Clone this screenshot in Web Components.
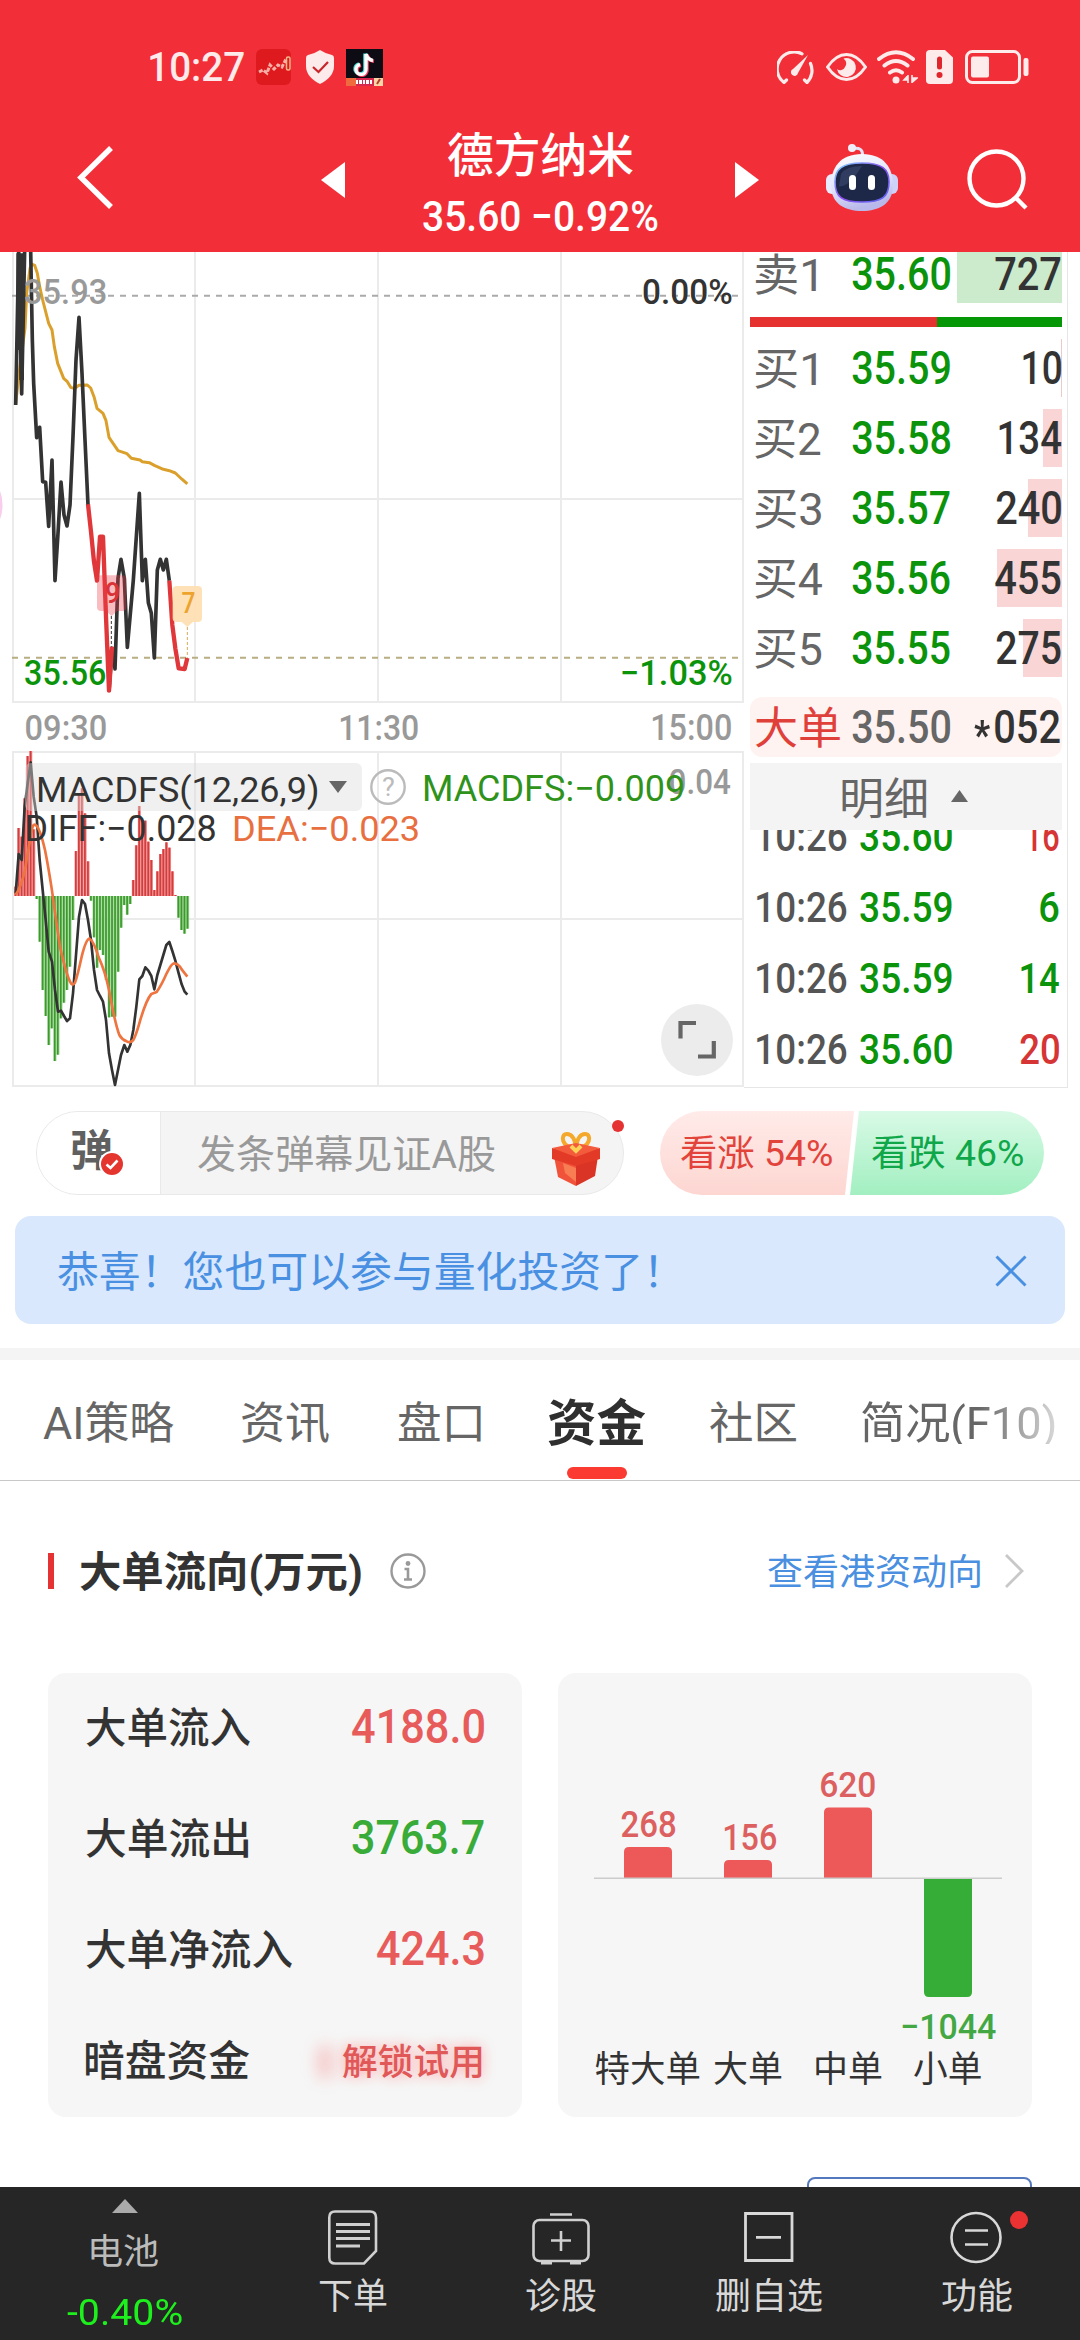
<!DOCTYPE html>
<html lang="zh-CN">
<head>
<meta charset="utf-8">
<title>德方纳米</title>
<style>
    html, body {
        margin: 0;
        padding: 0;
    }

    body {
        width: 1080px;
        height: 2340px;
        overflow: hidden;
        background: #fff;
        color: #333;
        font-family: Roboto, "Noto Sans CJK SC", sans-serif;
    }
</style>
</head>
<body>
<stock-page></stock-page>

<script>
const FONT = 'Roboto, "Noto Sans CJK SC", sans-serif';
const ctx = document.createElement('canvas').getContext('2d');

// left edge and width of the visible ink of a text
function ink(text, size, weight) {
    ctx.font = `${weight} ${size}px ${FONT}`;
    const m = ctx.measureText(text);
    return {left: -m.actualBoundingBoxLeft, width: m.actualBoundingBoxRight + m.actualBoundingBoxLeft};
}

// svg text starting at x, baseline y, squeezed to width w
function label(text, x, y, w, size, fill, weight = 500) {
    const box = ink(text, size, weight);
    const s = w / box.width;
    return `<text transform="translate(${x - box.left * s} ${y}) scale(${s} 1)" font-size="${size}" font-weight="${weight}" fill="${fill}">${text}</text>`;
}

class BaseElement extends HTMLElement {
    constructor() {
        super();
        this.shadow = this.attachShadow({mode: 'open'});
    }

    connectedCallback() {
        this.render();
    }
}

// <fit-text size w weight>: one line of text, set to an exact width
class FitText extends BaseElement {
    render() {
        const size = Number(this.getAttribute('size'));
        const weight = this.getAttribute('weight') || '400';
        const box = ink(this.textContent, size, weight);
        const w = Number(this.getAttribute('w')) || box.width;
        const s = w / box.width;
        // chinese glyphs sit a little high next to Roboto metrics
        const drop = /[\u4e00-\u9fff]/.test(this.textContent) ? size * 0.04 : 0;

        this.shadow.innerHTML = `
        <style>
            :host {
                display: block;
                flex: none;
                width: ${w}px;
                height: ${size}px;
                font-size: ${size}px;
                font-weight: ${weight};
                line-height: ${size}px;
                white-space: nowrap;
            }
            span {
                display: inline-block;
                transform-origin: 0 0;
                transform: translate(${-box.left * s}px, ${drop}px) scaleX(${s});
            }
        </style>
        <span><slot></slot></span>`;
    }
}
customElements.define('fit-text', FitText);

class StatusBar extends BaseElement {
    render() {
        this.shadow.innerHTML = `
        <style>
            :host {
                display: flex;
                align-items: center;
                box-sizing: border-box;
                height: 130px;
                padding: 4px 51px 0 150px;
                color: #fdeaea;
            }
            svg { display: block; flex: none; }
            .left, .right { display: flex; align-items: center; }
            .right { margin-left: auto; }
        </style>
        <div class="left">
            <fit-text size="41" w="94" weight="500">10:27</fit-text>
            <svg width="36" height="36" viewBox="0 0 36 36" style="margin-left:12px">
                <rect width="35" height="36" rx="6" fill="#df1a1f"/>
                <path d="M3 23l4-2 4 3 3-8 4 4 4-4 4 2 3-6 3 2" fill="none" stroke="#f7b0a8" stroke-width="3" stroke-dasharray="4 1.5"/>
                <rect x="30.5" y="8" width="3.5" height="13" rx="1.5" fill="none" stroke="#f6b787" stroke-width="1.5"/>
            </svg>
            <svg width="28" height="34" viewBox="0 0 28 34" style="margin-left:14px">
                <path d="M14 0Q20 4 26 5Q28 5.500 28 8V16Q28 27 14 34Q0 27 0 16V8Q0 5.500 2 5Q8 4 14 0Z" fill="#fdeaea"/>
                <path d="M7 17l5.500 5L22 12" fill="none" stroke="#c9262c" stroke-width="2.200"/>
            </svg>
            <svg width="37" height="37" viewBox="0 0 37 37" style="margin-left:12px">
                <rect width="37" height="37" fill="#0d0b14"/>
                <path d="M20 5v15a5 5 0 1 1-6-4.500M20 5q2 6 7 6.500" fill="none" stroke="#3fd8d8" stroke-width="3.600" transform="translate(-1 -.5)"/>
                <path d="M20 5v15a5 5 0 1 1-6-4.500M20 5q2 6 7 6.500" fill="none" stroke="#f03a5c" stroke-width="3.600" transform="translate(1 .8)"/>
                <path d="M20 5v15a5 5 0 1 1-6-4.500M20 5q2 6 7 6.500" fill="none" stroke="#fff" stroke-width="3.400"/>
                <path d="M0 29h37v8H0z" fill="#d8264c"/>
                <path d="M0 29h10v8H0z" fill="#ef6a3c"/>
                <path d="M28 29h9v8h-9z" fill="#fbd6a8"/>
                <path d="M10 33h16" stroke="#fff" stroke-width="4" stroke-dasharray="2 1 3 1"/>
                <path d="M31 35l3-5" stroke="#b4432a" stroke-width="2"/>
            </svg>
        </div>
        <div class="right">
            <svg width="37" height="33" viewBox="0 0 37 33">
                <g fill="none" stroke="#fdeaea" stroke-width="3.200" stroke-linecap="round">
                    <path d="M25 2.800A17 17 0 0 0 7 31.500L9.500 29M33.500 12.500A17 17 0 0 1 30 31.500L27.500 29"/>
                </g>
                <path d="M31 4L21 22a3.600 3.600 0 1 1-5-4z" fill="#fdeaea"/>
            </svg>
            <svg width="41" height="28" viewBox="0 0 41 28" style="margin-left:12px">
                <path d="M1.500 14Q10 1.500 20.500 1.500T39.500 14Q31 26.500 20.500 26.500T1.500 14Z" fill="none" stroke="#fdeaea" stroke-width="3"/>
                <path d="M17.500 5.500A9.500 9.500 0 1 1 11 16A5 5 0 0 0 19 14Q22 9.500 17.500 5.500Z" fill="#fdeaea"/>
            </svg>
            <svg width="41" height="34" viewBox="0 0 41 34" style="margin-left:10px">
                <g fill="none" stroke="#fdeaea" stroke-width="4" stroke-linecap="round">
                    <path d="M2 9Q19 -4.500 36 9M7.500 15.500Q19 6.500 30.500 15.500M13 22.500Q19 18 25 22.500"/>
                </g>
                <circle cx="19" cy="30" r="3.500" fill="#fdeaea"/>
                <path d="M31 25v8M31 25.500l-4 4.500h4M35 25v8M35 28h5l-5 4.500" fill="#fdeaea" stroke="#fdeaea" stroke-width="1.600"/>
            </svg>
            <svg width="27" height="34" viewBox="0 0 27 34" style="margin-left:8px">
                <path d="M4 0H19L27 7.500V30a4 4 0 0 1-4 4H4a4 4 0 0 1-4-4V4a4 4 0 0 1 4-4Z" fill="#fdeaea"/>
                <path d="M13.500 9v8" stroke="#e0262d" stroke-width="5" stroke-linecap="round"/>
                <circle cx="13.500" cy="25" r="3" fill="#e0262d"/>
            </svg>
            <svg width="64" height="34" viewBox="0 0 64 34" style="margin-left:12px">
                <rect x="1.500" y="1.500" width="53" height="31" rx="6" fill="none" stroke="#fdeaea" stroke-width="3"/>
                <rect x="6" y="6.500" width="18" height="21" rx="2" fill="#fdeaea"/>
                <rect x="58.500" y="8" width="5" height="18" rx="2" fill="#fdeaea"/>
            </svg>
        </div>`;
    }
}
customElements.define('status-bar', StatusBar);

class TitleBar extends BaseElement {
    render() {
        this.shadow.innerHTML = `
        <style>
            :host {
                display: flex;
                align-items: flex-start;
                height: 122px;
                padding-left: 77px;
                color: #fff;
            }
            svg { display: block; flex: none; }
            .title {
                display: flex;
                flex-direction: column;
                align-items: center;
                gap: 19px;
                width: 235px;
                margin: 0 77px 0 78px;
            }
        </style>
        <svg width="37" height="66" viewBox="0 0 37 66" style="margin-top:15px"><path d="M34 3L4 32.500L34 62" fill="none" stroke="#fff" stroke-width="5.500"/></svg>
        <svg width="24" height="36" viewBox="0 0 24 36" style="margin:32px 0 0 207px"><path d="M24 0V36L0 18Z" fill="#fff"/></svg>
        <div class="title">
            <fit-text size="47" w="185" weight="500">德方纳米</fit-text>
            <fit-text size="42" w="235" weight="500">35.60 −0.92%</fit-text>
        </div>
        <svg width="24" height="36" viewBox="0 0 24 36" style="margin-top:32px"><path d="M0 0V36L24 18Z" fill="#fff"/></svg>
        <svg width="72" height="67" viewBox="0 0 72 67" style="margin:14px 0 0 67px">
            <defs>
                <linearGradient id="head" x1="0" y1="0" x2=".3" y2="1"><stop offset="0" stop-color="#fff"/><stop offset=".6" stop-color="#dfe3fb"/><stop offset="1" stop-color="#b9b8ea"/></linearGradient>
                <linearGradient id="rim" x1="0" y1="0" x2="1" y2="1"><stop offset="0" stop-color="#7ad6ff"/><stop offset=".5" stop-color="#8c4ef0"/><stop offset="1" stop-color="#5a6af0"/></linearGradient>
            </defs>
            <path d="M27 4.500Q37 3 36.500 11" fill="none" stroke="#e4e2f5" stroke-width="3"/>
            <circle cx="26" cy="4" r="4" fill="#efeefb"/>
            <rect x="0" y="30" width="12" height="20" rx="6" fill="#e8ebfd"/>
            <rect x="60" y="30" width="12" height="20" rx="6" fill="#cfd2f8"/>
            <path d="M36 10C58 10 67 24 67 41C67 60 53 67 36 67S5 60 5 41C5 24 14 10 36 10Z" fill="url(#head)"/>
            <path d="M36 19C56 19 63 25 63 38C63 53 56 58 36 58S9 53 9 38C9 25 16 19 36 19Z" fill="#1d2748" stroke="url(#rim)" stroke-width="1.600"/>
            <path d="M15 30Q20 22 36 22L28 34Q18 44 13 42Z" fill="#46527a" opacity=".5"/>
            <rect x="23" y="31" width="7" height="15" rx="3.500" fill="#fff"/>
            <rect x="42" y="31" width="7" height="15" rx="3.500" fill="#fff"/>
        </svg>
        <svg width="62" height="62" viewBox="0 0 62 62" style="margin:19px 0 0 69px">
            <circle cx="29.500" cy="29.500" r="27" fill="none" stroke="#fff" stroke-width="4.400"/>
            <path d="M48 48L59 59" stroke="#fff" stroke-width="4.400"/>
        </svg>`;
    }
}
customElements.define('title-bar', TitleBar);

// histogram values: pixel tops, thirds of a pixel, in steps of about 9
const MACD_BARS = [560, 384, 410, 295, 168, 153, 388, 597, 725, 870, 948, 1035, 985, 1083, 1064, 955, 908, 870, 800, 660,
    453, 285, 265, 340, 484, 602, 712, 803, 750, 765, 840, 952, 950, 950, 815, 683, 615, 644, 612,
    540, 436, 318, 360, 362, 425, 480, 570, 514, 462, 447, 427, 443, 514, 585, 653, 690, 701, 686];

class StockChart extends BaseElement {
    bars() {
        return MACD_BARS.map((y, i) => {
            const x = 47 + i * 9.05;
            const top = Math.min(y, 588);
            const h = Math.abs(y - 588);
            const [light, dark] = y < 588 ? ['#f58a8a', '#cf3f3f'] : ['#9ad391', '#3c9a2c'];
            return `<rect x="${x - 4.5}" y="${top}" width="9.1" height="${h}" fill="${light}"/><rect x="${x - 3}" y="${top}" width="5" height="${h}" fill="${dark}"/>`;
        }).join('');
    }

    render() {
        this.shadow.innerHTML = `
        <style>
            :host { display: block; flex: none; width: 744px; height: 836px; }
            svg { display: block; }
            text { font-family: ${FONT}; }
        </style>
        <svg width="744" height="836" viewBox="0 0 744 836">
            <ellipse cx="-7" cy="253" rx="9.500" ry="21" fill="#f9cdec"/>
            <g fill="none" stroke="#ebebeb" stroke-width="2">
                <path d="M13 0V450.500M195 0V450.500M378 0V450.500M561 0V450.500M743 0V450.500M12 450H744M12 247H744"/>
                <path d="M13 500V835M195 500V835M378 500V835M561 500V835M743 500V835M12 500H744M12 667H744M12 834H744"/>
            </g>
            <path d="M12 43.700H739" stroke="#aaa" stroke-width="2" stroke-dasharray="6 6"/>
            <path d="M12 405.700H739" stroke="#b9ad82" stroke-width="2" stroke-dasharray="6 6"/>
            <g transform="translate(0 -2) scale(.33333)" fill="none" stroke-linejoin="round">
                <path d="M47 460L62 330L75 235L80 130L90 55L97 43L104 46L112 70L118 105L128 150L146 220L156 240L163 290L173 340L191 385L202 395L212 412L224 416L236 406L262 405L272 414L282 440L291 475L309 490L318 512L327 562L354 602L381 611L394 625L420 630L427 635L448 638L463 646L490 658L508 662L526 669L545 687L562 702" stroke="#dba02c" stroke-width="9"/>
                <path d="M47 465L56 0L65 432L74 0M92 0L97 270L101 400L110 563L119 532L128 695L137 697L146 829L156 630L165 992L174 850L183 696L192 795L201 828L210 765L219 560L228 330L237 202L246 370L255 570L264 765M327 1325L336 1195L345 1257L354 985L363 928L373 985L382 1192L400 990L418 730L427 992L436 928L445 1058L454 1090L463 1224L472 960L481 928L490 960L499 928L508 992" stroke="#333" stroke-width="11"/>
                <path d="M56 10V300M65 10V390" stroke="#333" stroke-width="14"/>
                <path d="M264 763L273 845L282 935L291 992L300 860L309 860L318 1100L327 1322L336 1190M508 992L517 1125L526 1195L536 1255L554 1257L562 1224" stroke="#e0383a" stroke-width="13"/>
                <path d="M334 1098V1190" stroke="#333" stroke-width="3" stroke-dasharray="9 6"/>
                <path d="M562 1131V1223" stroke="#d3ab55" stroke-width="3" stroke-dasharray="9 6"/>
                <path d="M303 976H367Q379 976 379 988V1071Q379 1083 367 1083H352L335 1098L318 1083H303Q291 1083 291 1071V988Q291 976 303 976Z" fill="#ee3b48" fill-opacity=".34"/>
                <path d="M530 1008H594Q606 1008 606 1020V1104Q606 1116 594 1116H579L562 1131L545 1116H530Q518 1116 518 1104V1020Q518 1008 530 1008Z" fill="#ffdfb3" fill-opacity=".95"/>
            </g>
            ${label('9', 106, 351, 13, 30, '#d93338')}
            ${label('7', 181.5, 361, 13.500, 29, '#eca42e')}
            ${label('35.93', 25, 52, 80.500, 35, '#999')}
            ${label('0.00%', 643, 52, 89, 35, '#333')}
            ${label('35.56', 25, 433, 80.500, 35, '#0b930b')}
            ${label('−1.03%', 622, 433, 110, 35, '#0b930b')}
            ${label('09:30', 25.500, 488, 80.500, 36, '#999')}
            ${label('11:30', 340, 488, 78, 36, '#999')}
            ${label('15:00', 652, 488, 79, 36, '#999')}
            <g transform="translate(0 448) scale(.33333)" fill="none" stroke-linejoin="round">
                ${this.bars()}
                <path d="M47 580L56 462L65 480L74 320L83 250L92 187L101 290L110 350L119 480L128 570L137 660L146 755L156 785L165 870L174 935L183 932L192 948L201 963L210 955L219 880L228 765L237 650L246 600L255 612L264 660L273 720L282 810L291 870L300 888L309 905L318 960L327 1060L336 1110L345 1155L354 1110L363 1065L373 1035L382 1055L391 1035L400 990L409 920L418 838L427 828L436 802L445 812L454 828L463 868L472 825L481 795L490 765L499 735L508 726L517 753L526 782L536 820L545 853L554 875L562 884" stroke="#333" stroke-width="8"/>
                <path d="M47 584Q64 560 75 510Q86 440 97 383Q101 370 108 376Q120 385 135 450Q145 500 156 572Q165 640 180 740Q200 830 213 850Q219 858 225 848Q233 825 245 770Q258 718 268 716Q280 720 296 772Q315 812 327 870Q345 970 358 1005Q365 1018 380 1024Q391 1030 400 1020Q408 1005 418 970Q438 900 454 882L470 876Q485 855 500 820Q515 790 522 790Q535 790 545 808L562 830" stroke="#ee7440" stroke-width="8"/>
            </g>
            <rect x="25" y="511" width="337" height="48" rx="6" fill="#dcdcdc" fill-opacity=".42"/>
            ${label('MACDFS(12,26,9)', 38, 550, 279, 36, '#333', 400)}
            <path d="M329 529H347L338 541Z" fill="#666"/>
            <circle cx="388" cy="535" r="16.700" fill="none" stroke="#bbb" stroke-width="2.400"/>
            ${label('?', 382, 544, 12.500, 26, '#bbb', 400)}
            ${label('0.04', 669.500, 542, 61.500, 35, '#999')}
            ${label('MACDFS:−0.009', 424, 549, 259, 36, '#2f931b', 400)}
            ${label('DIFF:−0.028', 26.500, 589, 189, 36, '#333', 400)}
            ${label('DEA:−0.023', 234, 589, 184, 36, '#e86f3f', 400)}
            <circle cx="697" cy="788" r="36" fill="#ececec"/>
            <path d="M680.500 786.500V771H696M698 804.500H713.800V789" fill="none" stroke="#666" stroke-width="4.200"/>
        </svg>`;
    }
}
customElements.define('stock-chart', StockChart);

class OrderRow extends BaseElement {
    render() {
        const get = name => this.getAttribute(name);
        this.shadow.innerHTML = `
        <style>
            :host {
                display: flex;
                flex: none;
                align-items: center;
                box-sizing: border-box;
                height: 58px;
                padding: 0 1px 1px 5px;
                color: #666;
                background: linear-gradient(${get('fill')}, ${get('fill')}) right / ${get('depth')}px 100% no-repeat;
            }
            .name { width: 97px; }
            .price { color: #0b930b; }
            .volume { margin-left: auto; color: #333; }
        </style>
        <div class="name"><fit-text size="44" w="${get('name-width')}">${get('name')}</fit-text></div>
        <fit-text class="price" size="46" w="98" weight="500">${get('price')}</fit-text>
        <fit-text class="volume" size="46" w="${get('volume-width')}" weight="500">${get('volume')}</fit-text>`;
    }
}
customElements.define('order-row', OrderRow);

class OrderBook extends BaseElement {
    render() {
        const row = (name, nw, price, volume, vw, depth, fill) =>
            `<order-row name="${name}" name-width="${nw}" price="${price}" volume="${volume}" volume-width="${vw}" depth="${depth}" fill="${fill}"></order-row>`;
        const trade = (price, volume, w, color) => `
            <div class="trade">
                <fit-text size="42" w="90" weight="500">10:26</fit-text>
                <fit-text class="green" size="42" w="92" weight="500">${price}</fit-text>
                <fit-text class="${color} amount" size="42" w="${w}" weight="500">${volume}</fit-text>
            </div>`;

        this.shadow.innerHTML = `
        <style>
            :host {
                display: flex;
                flex-direction: column;
                box-sizing: border-box;
                width: 324px;
                height: 836px;
                padding: 0 5px 0 6px;
                border-right: 1px solid #e6e6e6;
                border-bottom: 1px solid #e6e6e6;
                overflow: hidden;
            }
            .ask { height: 51px; display: flex; flex-direction: column; justify-content: flex-end; overflow: hidden; }
            .ratio { display: flex; height: 10px; margin: 14px 0 12px; background: #059705; }
            .ratio i { width: 187px; background: #e63131; }
            .bids { display: flex; flex-direction: column; gap: 12px; }
            .big {
                display: flex;
                align-items: center;
                box-sizing: border-box;
                height: 60px;
                margin: 20px 0 6px;
                padding: 0 2px 0 5px;
                border-radius: 12px;
                background: #fff3f2;
                color: #666;
            }
            .big .red { color: #e0403a; margin-right: 12px; }
            .big .star { margin: 17px 5px 0 auto; color: #333; }
            .big .volume { color: #333; }
            .more {
                display: flex;
                flex: none;
                align-items: center;
                gap: 25px;
                box-sizing: border-box;
                height: 67px;
                padding: 2px 0 0 92px;
                background: #f4f4f4;
                color: #666;
            }
            .more svg { margin-bottom: 3px; }
            .trades { flex: 1; overflow: hidden; }
            .scroll { margin-top: -14px; }
            .trade { display: flex; align-items: flex-start; height: 71px; padding: 0 3px 0 7px; gap: 13px; color: #555; }
            .amount { margin-left: auto; }
            .green { color: #0b930b; }
            .red { color: #d63535; }
        </style>
        <div class="ask">${row('卖1', 61, '35.60', '727', 66, 105, '#cceacc')}</div>
        <div class="ratio"><i></i></div>
        <div class="bids">
            ${row('买1', 61, '35.59', '10', 38, 1, '#eccaca')}
            ${row('买2', 66, '35.58', '134', 62, 19, '#f9d5d5')}
            ${row('买3', 66, '35.57', '240', 65, 34, '#f9d5d5')}
            ${row('买4', 67, '35.56', '455', 66, 65, '#f9d5d5')}
            ${row('买5', 66, '35.55', '275', 65, 39, '#f9d5d5')}
        </div>
        <div class="big">
            <fit-text class="red" size="44" w="85">大单</fit-text>
            <fit-text size="46" w="98" weight="500">35.50</fit-text>
            <fit-text class="star" size="40" w="16" weight="700">*</fit-text>
            <fit-text class="volume" size="46" w="65" weight="500">052</fit-text>
        </div>
        <div class="more">
            <fit-text size="44" w="84">明细</fit-text>
            <svg width="17" height="12" viewBox="0 0 17 12"><path d="M0 12L8.500 0L17 12Z" fill="#666"/></svg>
        </div>
        <div class="trades"><div class="scroll">
            ${trade('35.60', '16', 32, 'red')}
            ${trade('35.59', '6', 19, 'green')}
            ${trade('35.59', '14', 38, 'green')}
            ${trade('35.60', '20', 39, 'red')}
        </div></div>`;
    }
}
customElements.define('order-book', OrderBook);

class CommentBar extends BaseElement {
    render() {
        this.shadow.innerHTML = `
        <style>
            :host { display: flex; height: 84px; margin: 23px 36px 0; justify-content: space-between; }
            .input {
                position: relative;
                display: flex;
                align-items: center;
                box-sizing: border-box;
                width: 588px;
                border: 1px solid #e9e9e9;
                border-radius: 42px;
                background: #f4f4f4;
                color: #999;
            }
            .toggle {
                position: relative;
                display: flex;
                align-items: center;
                box-sizing: border-box;
                width: 124px;
                height: 82px;
                padding: 0 0 7px 35px;
                border-right: 1px solid #e9e9e9;
                border-radius: 41px 0 0 41px;
                background: #fff;
                color: #606060;
            }
            .badge { position: absolute; left: 62px; top: 39px; }
            .hint { margin-left: 37px; }
            .gift { margin: 12px 0 0 56px; }
            .dot { position: absolute; left: 575px; top: 8px; width: 12px; height: 12px; border-radius: 50%; background: #e53333; }
            .vote { position: relative; width: 384px; height: 84px; }
            .vote svg { position: absolute; left: 0; top: 0; }
            .options { position: relative; display: flex; align-items: center; justify-content: space-between; height: 83px; padding: 0 21px; }
            .up { color: #e2433b; }
            .down { color: #0fa74a; }
        </style>
        <div class="input">
            <div class="toggle">
                <fit-text size="43" w="40" weight="700">弹</fit-text>
                <svg class="badge" width="26" height="26" viewBox="0 0 26 26"><circle cx="13" cy="13" r="12" fill="#e5352f" stroke="#fff" stroke-width="2"/><path d="M7.500 13.500l4 3.500 7-7.500" fill="none" stroke="#fff" stroke-width="2.600"/></svg>
            </div>
            <fit-text class="hint" size="39" w="297">发条弹幕见证A股</fit-text>
            <svg class="gift" width="50" height="54" viewBox="0 0 50 54">
                <path d="M25 16C10 16 9 2 16 2Q23 2 25 15Q27 2 34 2C41 2 40 16 25 16Z" fill="none" stroke="#f4a92b" stroke-width="4"/>
                <path d="M3 24L25 32V54L7 45Z" fill="#f0523a"/>
                <path d="M47 24L25 32V54L44 44Z" fill="#d93425"/>
                <path d="M1 16L25 22L49 16V27L25 34L1 27Z" fill="#e23a27"/>
                <path d="M1 16L25 11L49 16L25 25Z" fill="#f35b3c"/>
                <path d="M12 31L25 36V50L14 41Z" fill="#f97d52"/>
                <path d="M20 14L25 19L30 14" fill="none" stroke="#ffd257" stroke-width="4"/>
            </svg>
            <div class="dot"></div>
        </div>
        <div class="vote">
            <svg width="384" height="84" viewBox="0 0 384 84">
                <defs>
                    <linearGradient id="up" x2="0" y2="1"><stop offset="0" stop-color="#ffebe9"/><stop offset="1" stop-color="#fdd6d1"/></linearGradient>
                    <linearGradient id="down" x2="0" y2="1"><stop offset="0" stop-color="#d9fae6"/><stop offset="1" stop-color="#a2efc1"/></linearGradient>
                </defs>
                <path d="M42 0H194L185 84H42A42 42 0 0 1 42 0Z" fill="url(#up)"/>
                <path d="M199 0H342A42 42 0 0 1 342 84H190Z" fill="url(#down)"/>
            </svg>
            <div class="options">
                <fit-text class="up" size="36" w="151">看涨 54%</fit-text>
                <fit-text class="down" size="36" w="151">看跌 46%</fit-text>
            </div>
        </div>`;
    }
}
customElements.define('comment-bar', CommentBar);

class NoticeBanner extends BaseElement {
    render() {
        this.shadow.innerHTML = `
        <style>
            :host {
                display: flex;
                align-items: center;
                justify-content: space-between;
                height: 108px;
                margin: 21px 15px 0;
                padding: 2px 38px 0 43px;
                box-sizing: border-box;
                border-radius: 16px;
                background: #d9e8fc;
                color: #4a90e2;
            }
        </style>
        <fit-text size="42" w="599">恭喜！您也可以参与量化投资了！</fit-text>
        <svg width="32" height="32" viewBox="0 0 32 32"><path d="M1.500 1.500L30.500 30.500M30.500 1.500L1.500 30.500" stroke="#4a90e2" stroke-width="3"/></svg>`;
    }
}
customElements.define('notice-banner', NoticeBanner);

class TabStrip extends BaseElement {
    render() {
        this.shadow.innerHTML = `
        <style>
            :host {
                display: flex;
                align-items: center;
                box-sizing: border-box;
                height: 133px;
                margin-top: 24px;
                padding: 14px 0 0 43px;
                border-top: 12px solid #f4f4f4;
                border-bottom: 1px solid #c8c8c8;
                color: #666;
            }
            .active { position: relative; color: #2f2f2f; }
            .active::after {
                content: "";
                position: absolute;
                left: 19px;
                top: 70px;
                width: 60px;
                height: 12px;
                border-radius: 6px;
                background: #fb3b32;
            }
            .last { -webkit-mask: linear-gradient(90deg, #000 60%, #0004); mask: linear-gradient(90deg, #000 60%, #0004); }
            fit-text { margin-bottom: 10px; }
        </style>
        <fit-text size="44" w="131">AI策略</fit-text>
        <fit-text size="44" w="87" style="margin-left:68px">资讯</fit-text>
        <fit-text size="44" w="83" style="margin-left:69px">盘口</fit-text>
        <div class="active" style="margin-left:67px"><fit-text size="50" w="98" weight="700">资金</fit-text></div>
        <fit-text size="44" w="86" style="margin-left:64px">社区</fit-text>
        <fit-text class="last" size="44" w="193" style="margin-left:66px">简况(F10)</fit-text>`;
    }
}
customElements.define('tab-strip', TabStrip);

class SectionTitle extends BaseElement {
    render() {
        this.shadow.innerHTML = `
        <style>
            :host { display: flex; align-items: center; height: 40px; margin: 70px 56px 0 48px; }
            .mark { width: 6px; height: 36px; margin-right: 26px; background: #e53333; }
            .info { margin-left: 29px; }
            .link { margin: 2px 24px 0 auto; color: #4a8fe0; }
        </style>
        <div class="mark"></div>
        <fit-text size="42" w="281" weight="700">大单流向(万元)</fit-text>
        <svg class="info" width="36" height="36" viewBox="0 0 36 36">
            <circle cx="18" cy="18" r="16.500" fill="none" stroke="#999" stroke-width="2.400"/>
            <circle cx="18" cy="10.500" r="2.400" fill="#999"/>
            <path d="M14.500 16H18V26.500M14 26.500H22" fill="none" stroke="#999" stroke-width="2.600"/>
        </svg>
        <fit-text class="link" size="36" w="212">查看港资动向</fit-text>
        <svg width="20" height="34" viewBox="0 0 20 34"><path d="M2 1L18 17L2 33" fill="none" stroke="#c8c8c8" stroke-width="2.800"/></svg>`;
    }
}
customElements.define('section-title', SectionTitle);

class FlowTable extends BaseElement {
    render() {
        this.shadow.innerHTML = `
        <style>
            :host {
                display: grid;
                grid-template-rows: repeat(4, 111px);
                box-sizing: border-box;
                width: 474px;
                height: 444px;
                padding: 0 38px;
                border-radius: 18px;
                background: #f6f6f6;
            }
            .row { display: flex; align-items: center; justify-content: space-between; padding-bottom: 3px; }
            .red { color: #e85b5b; }
            .green { color: #38ab38; }
            .locked { display: flex; align-items: center; padding: 3px 2px 0 0; }
            .haze { width: 14px; height: 32px; margin-right: 10px; background: #f59a9a; opacity: .55; filter: blur(8px); }
            .locked fit-text { color: #e05858; text-shadow: 0 0 14px #ff9a9a; }
        </style>
        <div class="row"><fit-text size="42" w="164" weight="500">大单流入</fit-text><fit-text class="red" size="48" w="132" weight="500">4188.0</fit-text></div>
        <div class="row"><fit-text size="42" w="162" weight="500">大单流出</fit-text><fit-text class="green" size="48" w="132" weight="500">3763.7</fit-text></div>
        <div class="row"><fit-text size="42" w="206" weight="500">大单净流入</fit-text><fit-text class="red" size="48" w="107" weight="500">424.3</fit-text></div>
        <div class="row"><fit-text size="42" w="164" weight="500">暗盘资金</fit-text>
            <div class="locked"><div class="haze"></div><fit-text size="36" w="140" weight="500">解锁试用</fit-text></div>
        </div>`;
    }
}
customElements.define('flow-table', FlowTable);

class FlowBars extends BaseElement {
    render() {
        this.shadow.innerHTML = `
        <style>
            :host { display: block; width: 474px; height: 444px; border-radius: 18px; background: #f6f6f6; }
            text { font-family: ${FONT}; }
        </style>
        <svg width="474" height="444" viewBox="0 0 474 444">
            <g fill="#ed5858">
                <path d="M66 205V179q0-5 5-5h38q5 0 5 5v26z"/>
                <path d="M166 205V192q0-5 5-5h38q5 0 5 5v13z"/>
                <path d="M266 205V139.500q0-5 5-5h38q5 0 5 5V205z"/>
            </g>
            <path d="M366 206V319q0 5 5 5h38q5 0 5-5V206z" fill="#36ad36"/>
            <path d="M36 205.300H444" stroke="#ccc" stroke-width="1.400"/>
            ${label('268', 63.5, 164, 54, 36, '#dd6060')}
            ${label('156', 166, 177, 52, 36, '#dd6060')}
            ${label('620', 263, 124, 54, 36, '#dd6060')}
            ${label('−1044', 344, 366, 94, 36, '#43a843')}
            ${label('特大单', 37.5, 409, 104.5, 36, '#333', 400)}
            ${label('大单', 156, 409, 68, 36, '#333', 400)}
            ${label('中单', 258, 409, 66, 36, '#333', 400)}
            ${label('小单', 356, 409, 67.5, 36, '#333', 400)}
        </svg>`;
    }
}
customElements.define('flow-bars', FlowBars);

class BottomNav extends BaseElement {
    render() {
        this.shadow.innerHTML = `
        <style>
            :host {
                display: grid;
                grid-template-columns: 249px repeat(4, 208px);
                height: 153px;
                background: #262626;
                color: #d8d8d8;
            }
            .item { display: flex; flex-direction: column; align-items: center; }
            .item svg { display: block; margin: 21px 0 12px; overflow: visible; }
            .index { color: #bbb; }
            .index svg { margin: 12px 0 21px; }
            .index .pct { margin-top: 25px; color: #1df01d; }
        </style>
        <div class="item index">
            <svg width="26" height="14" viewBox="0 0 26 14"><path d="M0 14L13 0L26 14Z" fill="#aaa"/></svg>
            <fit-text size="35" w="67">电池</fit-text>
            <fit-text class="pct" size="37" w="115">-0.40%</fit-text>
        </div>
        <div class="item">
            <svg width="50" height="58" viewBox="0 0 50 58"><g fill="none" stroke="#d0d0d0" stroke-width="2.600">
                <path d="M7 3.500H42Q48 3.500 48 9.500V43L36 55.500H7Q1.300 55.500 1.300 49.500V9.500Q1.300 3.500 7 3.500Z"/>
                <path d="M8 16.500H42M8 23.500H42M8 30.500H42M8 38H32" stroke-width="3"/></g></svg>
            <fit-text size="36" w="68">下单</fit-text>
        </div>
        <div class="item">
            <svg width="58" height="58" viewBox="0 0 58 58"><g fill="none" stroke="#d0d0d0" stroke-width="2.600">
                <rect x="1.500" y="12" width="55" height="41" rx="6"/>
                <path d="M18 6.500H40M29 23V43M19 32.500H39"/><path d="M9 54.500H20M38 54.500H49" stroke-width="4"/></g></svg>
            <fit-text size="36" w="70">诊股</fit-text>
        </div>
        <div class="item">
            <svg width="50" height="58" viewBox="0 0 50 58"><path d="M1.500 5.500H48V52.500H1.500ZM12 29.300H37" fill="none" stroke="#d8d8d8" stroke-width="2.800"/></svg>
            <fit-text size="36" w="106">删自选</fit-text>
        </div>
        <div class="item">
            <svg width="52" height="58" viewBox="0 0 52 58"><g fill="none" stroke="#d8d8d8" stroke-width="2.600"><circle cx="25" cy="29.500" r="24.500"/><path d="M14 22.500H37M14 36.500H37"/></g><circle cx="68" cy="12" r="9" fill="#ea3232"/></svg>
            <fit-text size="36" w="70">功能</fit-text>
        </div>`;
    }
}
customElements.define('bottom-nav', BottomNav);

class StockPage extends BaseElement {
    render() {
        this.shadow.innerHTML = `
        <style>
            :host { display: flex; flex-direction: column; width: 1080px; height: 2340px; overflow: hidden; background: #fff; }
            header { flex: none; height: 252px; background: #f22f38; }
            .market, .cards { display: flex; flex: none; }
            .cards { justify-content: space-between; margin: 82px 48px 0; }
            .next { flex: 1; overflow: hidden; }
            .button { box-sizing: border-box; width: 225px; height: 60px; margin: 60px 48px 0 auto; border: 2px solid #5478bd; border-radius: 8px; }
            comment-bar, notice-banner, tab-strip, section-title, bottom-nav { flex: none; }
        </style>
        <header>
            <status-bar></status-bar>
            <title-bar></title-bar>
        </header>
        <div class="market">
            <stock-chart></stock-chart>
            <order-book></order-book>
        </div>
        <comment-bar></comment-bar>
        <notice-banner></notice-banner>
        <tab-strip></tab-strip>
        <section-title></section-title>
        <div class="cards">
            <flow-table></flow-table>
            <flow-bars></flow-bars>
        </div>
        <div class="next"><div class="button"></div></div>
        <bottom-nav></bottom-nav>`;
    }
}
customElements.define('stock-page', StockPage);
</script>
</body>
</html>
